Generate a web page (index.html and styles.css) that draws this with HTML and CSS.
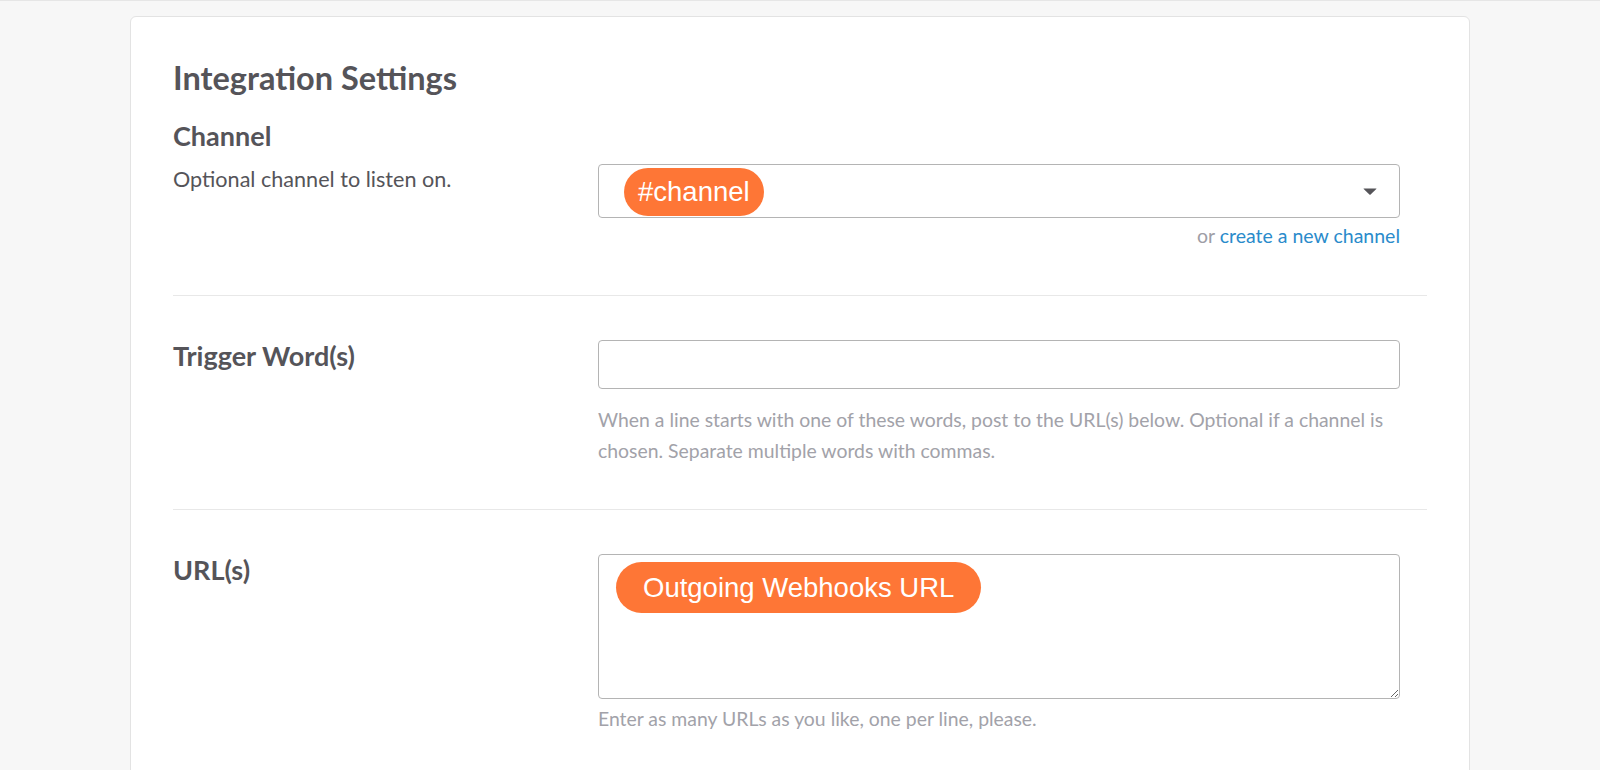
FILE: index.html
```html
<!DOCTYPE html>
<html lang="en">
<head>
<meta charset="utf-8">
<title>Integration Settings</title>
<link rel="stylesheet" href="styles.css">
</head>
<body>
  <main class="card">
    <h2 class="title">Integration Settings</h2>

    <section class="row row-channel">
      <div class="label-col">
        <h3 class="label">Channel</h3>
        <p class="desc">Optional channel to listen on.</p>
      </div>
      <div class="field-col field-offset">
        <div class="select">
          <span class="pill pill-channel">#channel</span>
          <svg class="caret" width="14" height="7" viewBox="0 0 14 7" aria-hidden="true">
            <path d="M0.8 0.4 H13.2 Q13.8 0.4 13.3 0.9 L7.6 6.4 Q7 6.9 6.4 6.4 L0.7 0.9 Q0.2 0.4 0.8 0.4 Z" fill="#555459"/>
          </svg>
        </div>
        <p class="create">or <a href="#" class="link">create a new channel</a></p>
      </div>
    </section>

    <section class="row row-trigger">
      <div class="label-col">
        <h3 class="label">Trigger Word(s)</h3>
      </div>
      <div class="field-col">
        <input class="text-input" type="text" aria-label="Trigger Word(s)">
        <p class="help help-trigger">When a line starts with one of these words, post to the URL(s) below. Optional if a channel is<br>chosen. Separate multiple words with commas.</p>
      </div>
    </section>

    <section class="row row-url">
      <div class="label-col">
        <h3 class="label">URL(s)</h3>
      </div>
      <div class="field-col">
        <div class="textarea-wrap">
          <textarea class="textarea" aria-label="URL(s)"></textarea>
          <span class="pill pill-url">Outgoing Webhooks URL</span>
        </div>
        <p class="help help-url">Enter as many URLs as you like, one per line, please.</p>
      </div>
    </section>
  </main>
</body>
</html>
```

FILE: styles.css
```css
html {
  overflow: hidden;
}

body {
  margin: 0;
  background: #f7f7f7;
  border-top: 1px solid #e6e6e6;
  font-family: Lato, "Open Sans", sans-serif;
  color: #555459;
}

.card {
  box-sizing: border-box;
  width: 1340px;
  margin: 15px 0 0 130px;
  padding: 41px 42px 80px;
  background: #ffffff;
  border: 1px solid #e3e3e3;
  border-radius: 6px;
}

.title {
  margin: 0 0 22px;
  font-size: 32.5px;
  line-height: 40px;
  font-weight: 700;
  color: #555459;
}

.row {
  display: grid;
  grid-template-columns: 425px 802px;
  align-items: start;
}

.row-channel {
  padding-bottom: 45px;
  border-bottom: 1px solid #e8e8e8;
}

.row-trigger {
  padding: 44px 0 43px;
  border-bottom: 1px solid #e8e8e8;
}

.row-url {
  padding-top: 44px;
}

.label {
  margin: 0;
  font-size: 27px;
  line-height: 32px;
  font-weight: 700;
  color: #555459;
}

.desc {
  margin: 12px 0 0;
  font-size: 21.6px;
  line-height: 31px;
  color: #555459;
}

.field-offset {
  margin-top: 44px;
}

.select {
  box-sizing: border-box;
  height: 54px;
  display: flex;
  align-items: center;
  justify-content: space-between;
  padding: 0 22px 0 25px;
  border: 1px solid #b4b4b4;
  border-radius: 4px;
  background: #fff;
}

.pill {
  display: inline-block;
  background: #fe7636;
  color: #ffffff;
  font-family: "Liberation Sans", Arial, sans-serif;
  font-size: 27.5px;
  white-space: nowrap;
}

.pill-channel {
  height: 48px;
  line-height: 48px;
  padding: 0 14px;
  border-radius: 24px;
  margin-top: 2px;
}

.caret {
  display: block;
  margin-top: 1px;
}

.create {
  margin: 4px 0 0;
  text-align: right;
  font-size: 19.5px;
  line-height: 28px;
  color: #9e9ea6;
}

.link {
  color: #2a8bcb;
  text-decoration: none;
}

.text-input {
  box-sizing: border-box;
  display: block;
  width: 802px;
  height: 49px;
  margin: 0;
  border: 1px solid #b4b4b4;
  border-radius: 4px;
  background: #fff;
  outline: none;
}

.help {
  margin: 0;
  font-size: 19.4px;
  line-height: 31px;
  color: #a2a2a9;
  white-space: nowrap;
}

.help-trigger {
  margin-top: 15px;
}

.help-url {
  margin-top: 4px;
}

.textarea-wrap {
  position: relative;
  height: 145px;
}

.textarea {
  box-sizing: border-box;
  display: block;
  width: 802px;
  height: 145px;
  margin: 0;
  border: 1px solid #b4b4b4;
  border-radius: 4px;
  background: #fff;
  resize: vertical;
  outline: none;
}

.pill-url {
  position: absolute;
  left: 18px;
  top: 8px;
  height: 51px;
  line-height: 51px;
  padding: 0 27px;
  border-radius: 26px;
}
```
